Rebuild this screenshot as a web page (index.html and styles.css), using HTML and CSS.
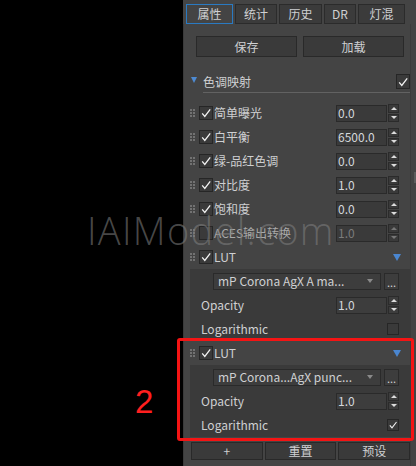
FILE: index.html
```html
<!DOCTYPE html>
<html>
<head>
<meta charset="utf-8">
<link rel="stylesheet" href="styles.css">
</head>
<body>
<div class="app">
  <div class="viewport"></div>
  <div class="panel">
    <div class="tabs">
      <div class="tab active t1">属性</div>
      <div class="tab t2">统计</div>
      <div class="tab t3">历史</div>
      <div class="tab t4">DR</div>
      <div class="tab t5">灯混</div>
    </div>
    <div class="main">
      <div class="content">
        <div class="btn-row">
          <div class="btn">保存</div>
          <div class="btn">加载</div>
        </div>
        <div class="section-head">
          <span class="tri"></span>
          <div class="head-main">
            <span class="sec-title">色调映射</span>
            <span class="cb big"><svg viewBox="0 0 12 12"><path d="M2.2 6.4 L4.8 9.4 L10.2 2.4"/></svg></span>
          </div>
        </div>

        <div class="row">
          <span class="grip"></span>
          <span class="cb"><svg viewBox="0 0 12 12"><path d="M2.2 6.4 L4.8 9.4 L10.2 2.4"/></svg></span>
          <span class="label">简单曝光</span>
          <span class="num">0.0</span>
          <span class="spin"><span class="up"></span><span class="dn"></span></span>
        </div>
        <div class="row">
          <span class="grip"></span>
          <span class="cb"><svg viewBox="0 0 12 12"><path d="M2.2 6.4 L4.8 9.4 L10.2 2.4"/></svg></span>
          <span class="label">白平衡</span>
          <span class="num">6500.0</span>
          <span class="spin"><span class="up"></span><span class="dn"></span></span>
        </div>
        <div class="row">
          <span class="grip"></span>
          <span class="cb"><svg viewBox="0 0 12 12"><path d="M2.2 6.4 L4.8 9.4 L10.2 2.4"/></svg></span>
          <span class="label">绿-品红色调</span>
          <span class="num">0.0</span>
          <span class="spin"><span class="up"></span><span class="dn"></span></span>
        </div>
        <div class="row">
          <span class="grip"></span>
          <span class="cb"><svg viewBox="0 0 12 12"><path d="M2.2 6.4 L4.8 9.4 L10.2 2.4"/></svg></span>
          <span class="label">对比度</span>
          <span class="num">1.0</span>
          <span class="spin"><span class="up"></span><span class="dn"></span></span>
        </div>
        <div class="row">
          <span class="grip"></span>
          <span class="cb"><svg viewBox="0 0 12 12"><path d="M2.2 6.4 L4.8 9.4 L10.2 2.4"/></svg></span>
          <span class="label">饱和度</span>
          <span class="num">0.0</span>
          <span class="spin"><span class="up"></span><span class="dn"></span></span>
        </div>
        <div class="row disabled">
          <span class="grip"></span>
          <span class="cb"></span>
          <span class="label">ACES输出转换</span>
          <span class="num">1.0</span>
          <span class="spin"><span class="up"></span><span class="dn"></span></span>
        </div>

        <div class="row lut-row">
          <span class="grip"></span>
          <span class="cb"><svg viewBox="0 0 12 12"><path d="M2.2 6.4 L4.8 9.4 L10.2 2.4"/></svg></span>
          <span class="label">LUT</span>
          <span class="btri"></span>
        </div>
        <div class="subbox">
          <div class="sub-row dd-row">
            <span class="dropdown"><span class="dd-text">mP Corona AgX A ma...</span><span class="dd-arrow"></span></span>
            <span class="more">...</span>
          </div>
          <div class="sub-row">
            <span class="label">Opacity</span>
            <span class="num">1.0</span>
            <span class="spin"><span class="up"></span><span class="dn"></span></span>
          </div>
          <div class="sub-row">
            <span class="label">Logarithmic</span>
            <span class="cb small"></span>
          </div>
        </div>

        <div class="row lut-row">
          <span class="grip"></span>
          <span class="cb"><svg viewBox="0 0 12 12"><path d="M2.2 6.4 L4.8 9.4 L10.2 2.4"/></svg></span>
          <span class="label">LUT</span>
          <span class="btri"></span>
        </div>
        <div class="subbox">
          <div class="sub-row dd-row">
            <span class="dropdown"><span class="dd-text">mP Corona...AgX punc...</span><span class="dd-arrow"></span></span>
            <span class="more">...</span>
          </div>
          <div class="sub-row">
            <span class="label">Opacity</span>
            <span class="num">1.0</span>
            <span class="spin"><span class="up"></span><span class="dn"></span></span>
          </div>
          <div class="sub-row">
            <span class="label">Logarithmic</span>
            <span class="cb small"><svg viewBox="0 0 12 12"><path d="M2.2 6.4 L4.8 9.4 L10.2 2.4"/></svg></span>
          </div>
        </div>

        <div class="footer">
          <div class="btn">+</div>
          <div class="btn">重置</div>
          <div class="btn">预设</div>
        </div>
      </div>
      <div class="scroll"><span class="thumb"></span></div>
    </div>
  </div>
</div>
<div class="watermark">IAIModel.com</div>
<div class="anno-num">2</div>
<div class="anno-box"></div>
</body>
</html>
```

FILE: styles.css
```css
* { box-sizing: border-box; }
html, body { margin: 0; padding: 0; }
body {
  background: #000;
  width: 416px;
  height: 466px;
  overflow: hidden;
  position: relative;
  font-family: "Noto Sans CJK SC", "Noto Sans", sans-serif;
  font-size: 12px;
  color: #cfd0d2;
}
.app { display: flex; height: 466px; }
.viewport { width: 183px; flex: none; background: #000; }
.panel { width: 233px; flex: none; background: #444; display: flex; flex-direction: column; }

.tabs { display: flex; gap: 2px; padding: 4px 0 0 3px; height: 24px; flex: none; }
.tab {
  height: 20px;
  border: 1px solid #2b2b2b;
  background: #3b3b3b;
  display: flex; align-items: center; justify-content: center;
  line-height: 1;
}
.t1 { width: 47px; } .t2 { width: 42px; } .t3 { width: 43px; } .t4 { width: 32px; } .t5 { width: 47px; }
.tab.active { border-color: #2a7ac2; background: #444; }

.main { flex: 1; display: flex; }
.content { width: 227px; flex: none; border-left: 1px solid #3a3a3a; padding-top: 12px; }
.scroll { flex: 1; border-left: 1px solid #3c3c3c; display: flex; justify-content: flex-end; padding-top: 148px; }
.thumb { width: 2px; height: 11px; background: #5c5c5c; }

.btn-row { display: flex; gap: 6px; padding: 0 6px 0 12px; height: 21px; }
.btn {
  flex: 1;
  background: #3a3a3a;
  border: 1px solid #292929;
  display: flex; align-items: center; justify-content: center;
  line-height: 1;
}

.section-head { display: flex; margin-top: 15px; padding-left: 7px; }
.tri {
  width: 0; height: 0; margin-top: 5px; flex: none;
  border-left: 3px solid transparent; border-right: 3px solid transparent;
  border-top: 6px solid #4d8ad2;
}
.head-main {
  flex: 1; margin-left: 6px; height: 21px;
  border-bottom: 1px solid #626262;
  display: flex; align-items: center; justify-content: space-between;
  padding-bottom: 1px;
}
.sec-title { line-height: 1; }

.cb {
  width: 14px; height: 14px; flex: none;
  background: #3a3a3a; border: 1px solid #262626;
  display: flex; align-items: center; justify-content: center;
}
.cb svg { width: 12px; height: 12px; fill: none; stroke: #f2f2f2; stroke-width: 1.3; }
.cb.big { width: 14px; height: 15px; }
.cb.small { width: 12px; height: 12px; }
.cb.small svg { width: 10px; height: 10px; }

.row { display: flex; align-items: center; height: 24px; padding: 0 11px 0 6px; }
.section-head + .row { margin-top: 8px; }
.grip { width: 5px; height: 8px; flex: none; margin-right: 4px; }
.grip::before {
  content: ""; display: block; width: 2px; height: 2px; background: #727272;
  box-shadow: 3px 0 #727272, 0 3px #727272, 3px 3px #727272, 0 6px #727272, 3px 6px #727272;
}
.label { flex: 1; margin-left: 1px; line-height: 1; white-space: nowrap; }
.num {
  width: 51px; height: 17px; flex: none;
  background: #3a3a3a; border: 1px solid #2a2a2a;
  padding-left: 1px; line-height: 14px; color: #d4d8dc;
}
.spin { width: 11px; height: 18px; margin-left: 1px; display: flex; flex-direction: column; gap: 1px; flex: none; }
.spin span {
  flex: 1; background: #3a3a3a; border: 1px solid #2b2b2b;
  display: flex; align-items: center; justify-content: center;
}
.spin .up::before {
  content: ""; width: 0; height: 0;
  border-left: 3px solid transparent; border-right: 3px solid transparent;
  border-bottom: 3px solid #dcdcdc;
}
.spin .dn::before {
  content: ""; width: 0; height: 0;
  border-left: 3px solid transparent; border-right: 3px solid transparent;
  border-top: 3px solid #dcdcdc;
}
.disabled .label { color: #a9a9a9; }
.disabled .num { color: #7c7c7c; }
.disabled .spin .up::before { border-bottom-color: #777; }
.disabled .spin .dn::before { border-top-color: #777; }

.btri {
  width: 0; height: 0; flex: none; margin-right: -2px;
  border-left: 4px solid transparent; border-right: 4px solid transparent;
  border-top: 7px solid #4a86d0;
}

.subbox { margin-left: 6px; background: #3a3a3a; }
.sub-row { display: flex; align-items: center; height: 24px; padding: 0 11px 0 11px; }
.sub-row .label { margin-left: 0; }
.sub-row .num { background: #3d3d3d; }
.sub-row .spin span { background: #3d3d3d; }
.dd-row { padding-left: 23px; }
.dropdown {
  width: 168px; height: 17px; flex: none;
  background: #3d3d3d; border: 1px solid #2a2a2a;
  display: flex; align-items: center; justify-content: space-between;
  padding: 0 7px 0 4px;
}
.dd-text { line-height: 1; white-space: nowrap; }
.dd-arrow {
  width: 0; height: 0;
  border-left: 3px solid transparent; border-right: 3px solid transparent;
  border-top: 4px solid #8a8a8a;
}
.more {
  width: 15px; height: 17px; margin-left: 3px; flex: none;
  background: #3d3d3d; border: 1px solid #2a2a2a;
  display: flex; align-items: center; justify-content: center;
  line-height: 1; font-size: 11px; padding-top: 2px;
}

.footer { display: flex; gap: 2px; padding: 0 0 0 7px; height: 18px; margin-top: 5px; }
.footer .btn { flex: 1; }

.watermark {
  position: absolute; left: 87px; top: 211px;
  font-family: "Open Sans", "Noto Sans", sans-serif; font-weight: 300;
  font-size: 38px; line-height: 38px; letter-spacing: 1.3px;
  color: rgba(125, 125, 125, 0.58);
  white-space: nowrap; pointer-events: none;
}
.anno-num {
  position: absolute; left: 135px; top: 385px;
  font-family: "Liberation Sans", Arial, sans-serif;
  font-size: 33px; line-height: 33px; color: #ff1f1f;
}
.anno-box {
  position: absolute; left: 177px; top: 338px; width: 237px; height: 103px;
  border: 3px solid #f41414; border-radius: 3px;
}
```
